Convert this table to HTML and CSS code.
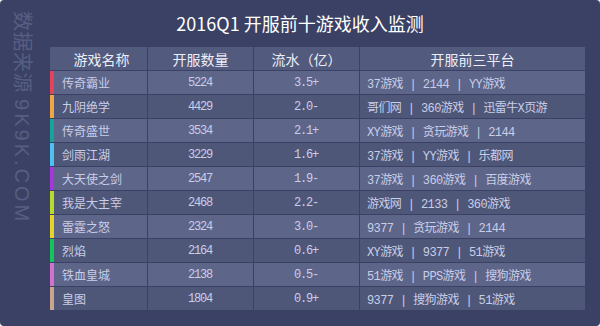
FILE: index.html
```html
<!DOCTYPE html>
<html lang="zh-CN">
<head>
<meta charset="utf-8">
<title>2016Q1 开服前十游戏收入监测</title>
<link rel="stylesheet" href="styles.css">
</head>
<body>
<div class="panel">
  <div class="watermark">数据来源 <span class="wm-latin">9K9K.COM</span></div>
  <h1 class="title">2016Q1 开服前十游戏收入监测</h1>
  <div class="table">
    <div class="row head">
      <div class="cell c1">游戏名称</div>
      <div class="cell c2">开服数量</div>
      <div class="cell c3">流水（亿）</div>
      <div class="cell c4">开服前三平台</div>
    </div>
    <div class="row odd">
      <div class="cell c1 b1">传奇霸业</div>
      <div class="cell c2 num">5224</div>
      <div class="cell c3 num">3.5+</div>
      <div class="cell c4">37游戏 | 2144 | YY游戏</div>
    </div>
    <div class="row even">
      <div class="cell c1 b2">九阴绝学</div>
      <div class="cell c2 num">4429</div>
      <div class="cell c3 num">2.0-</div>
      <div class="cell c4">哥们网 | 360游戏 | 迅雷牛X页游</div>
    </div>
    <div class="row odd">
      <div class="cell c1 b3">传奇盛世</div>
      <div class="cell c2 num">3534</div>
      <div class="cell c3 num">2.1+</div>
      <div class="cell c4">XY游戏 | 贪玩游戏 | 2144</div>
    </div>
    <div class="row even">
      <div class="cell c1 b4">剑雨江湖</div>
      <div class="cell c2 num">3229</div>
      <div class="cell c3 num">1.6+</div>
      <div class="cell c4">37游戏 | YY游戏 | 乐都网</div>
    </div>
    <div class="row odd">
      <div class="cell c1 b5">大天使之剑</div>
      <div class="cell c2 num">2547</div>
      <div class="cell c3 num">1.9-</div>
      <div class="cell c4">37游戏 | 360游戏 | 百度游戏</div>
    </div>
    <div class="row even">
      <div class="cell c1 b6">我是大主宰</div>
      <div class="cell c2 num">2468</div>
      <div class="cell c3 num">2.2-</div>
      <div class="cell c4">游戏网 | 2133 | 360游戏</div>
    </div>
    <div class="row odd">
      <div class="cell c1 b7">雷霆之怒</div>
      <div class="cell c2 num">2324</div>
      <div class="cell c3 num">3.0-</div>
      <div class="cell c4">9377 | 贪玩游戏 | 2144</div>
    </div>
    <div class="row even">
      <div class="cell c1 b8">烈焰</div>
      <div class="cell c2 num">2164</div>
      <div class="cell c3 num">0.6+</div>
      <div class="cell c4">XY游戏 | 9377 | 51游戏</div>
    </div>
    <div class="row odd">
      <div class="cell c1 b9">铁血皇城</div>
      <div class="cell c2 num">2138</div>
      <div class="cell c3 num">0.5-</div>
      <div class="cell c4">51游戏 | PPS游戏 | 搜狗游戏</div>
    </div>
    <div class="row even">
      <div class="cell c1 b10">皇图</div>
      <div class="cell c2 num">1804</div>
      <div class="cell c3 num">0.9+</div>
      <div class="cell c4">9377 | 搜狗游戏 | 51游戏</div>
    </div>
  </div>
</div>
</body>
</html>
```
FILE: styles.css
```css
html, body {
  margin: 0;
  padding: 0;
  background: #ffffff;
}
body {
  font-family: "Noto Sans CJK SC", "Noto Sans", sans-serif;
}
.panel {
  position: relative;
  width: 600px;
  height: 326px;
  background: #3a4164;
  border-radius: 4px;
  overflow: hidden;
  box-sizing: border-box;
}
.watermark {
  position: absolute;
  left: 12px;
  top: 11px;
  writing-mode: vertical-rl;
  text-orientation: sideways;
  font-family: "Liberation Sans", "Noto Sans CJK SC", sans-serif;
  font-size: 20px;
  line-height: 20px;
  color: #575e82;
  white-space: nowrap;
  letter-spacing: 0.5px;
}
.wm-latin {
  letter-spacing: 3px;
}
.title {
  margin: 0;
  height: 47px;
  line-height: 46px;
  text-align: center;
  font-size: 18px;
  font-weight: normal;
  color: #ffffff;
  font-family: "Noto Sans CJK SC", "Noto Sans", sans-serif;
}
.table {
  margin-left: 50px;
  width: 535px;
  display: flex;
  flex-direction: column;
  gap: 1px;
}
.row {
  display: grid;
  grid-template-columns: 97px 105px 105px 225px;
  column-gap: 1px;
  height: 23px;
}
.cell {
  display: flex;
  align-items: center;
  white-space: nowrap;
  overflow: hidden;
  font-size: 12px;
  color: #c9cee8;
}
.head .cell {
  background: #525a7e;
  justify-content: center;
  font-size: 14px;
  color: #eceef8;
}
.head .c1 {
  padding-left: 6px;
}
.odd .cell { background: #5d6589; }
.even .cell { background: #4f5779; }
.row:not(.head) .c1 {
  border-left: 4px solid transparent;
  padding-left: 8px;
}
.num {
  justify-content: center;
  font-family: "Liberation Mono", "DejaVu Sans Mono", monospace;
  letter-spacing: -1.2px;
  padding-right: 1px;
}
.row:not(.head) .c4 {
  padding-left: 7px;
  font-family: "Liberation Mono", "Noto Sans CJK SC", monospace;
  letter-spacing: -0.6px;
}
.b1 { border-left-color: #e2445c !important; }
.b2 { border-left-color: #f2a545 !important; }
.b3 { border-left-color: #17a39c !important; }
.b4 { border-left-color: #4dc2f2 !important; }
.b5 { border-left-color: #a339d9 !important; }
.b6 { border-left-color: #b7dc2b !important; }
.b7 { border-left-color: #e6d32c !important; }
.b8 { border-left-color: #13c55b !important; }
.b9 { border-left-color: #d271d0 !important; }
.b10 { border-left-color: #c9a68f !important; }
```
